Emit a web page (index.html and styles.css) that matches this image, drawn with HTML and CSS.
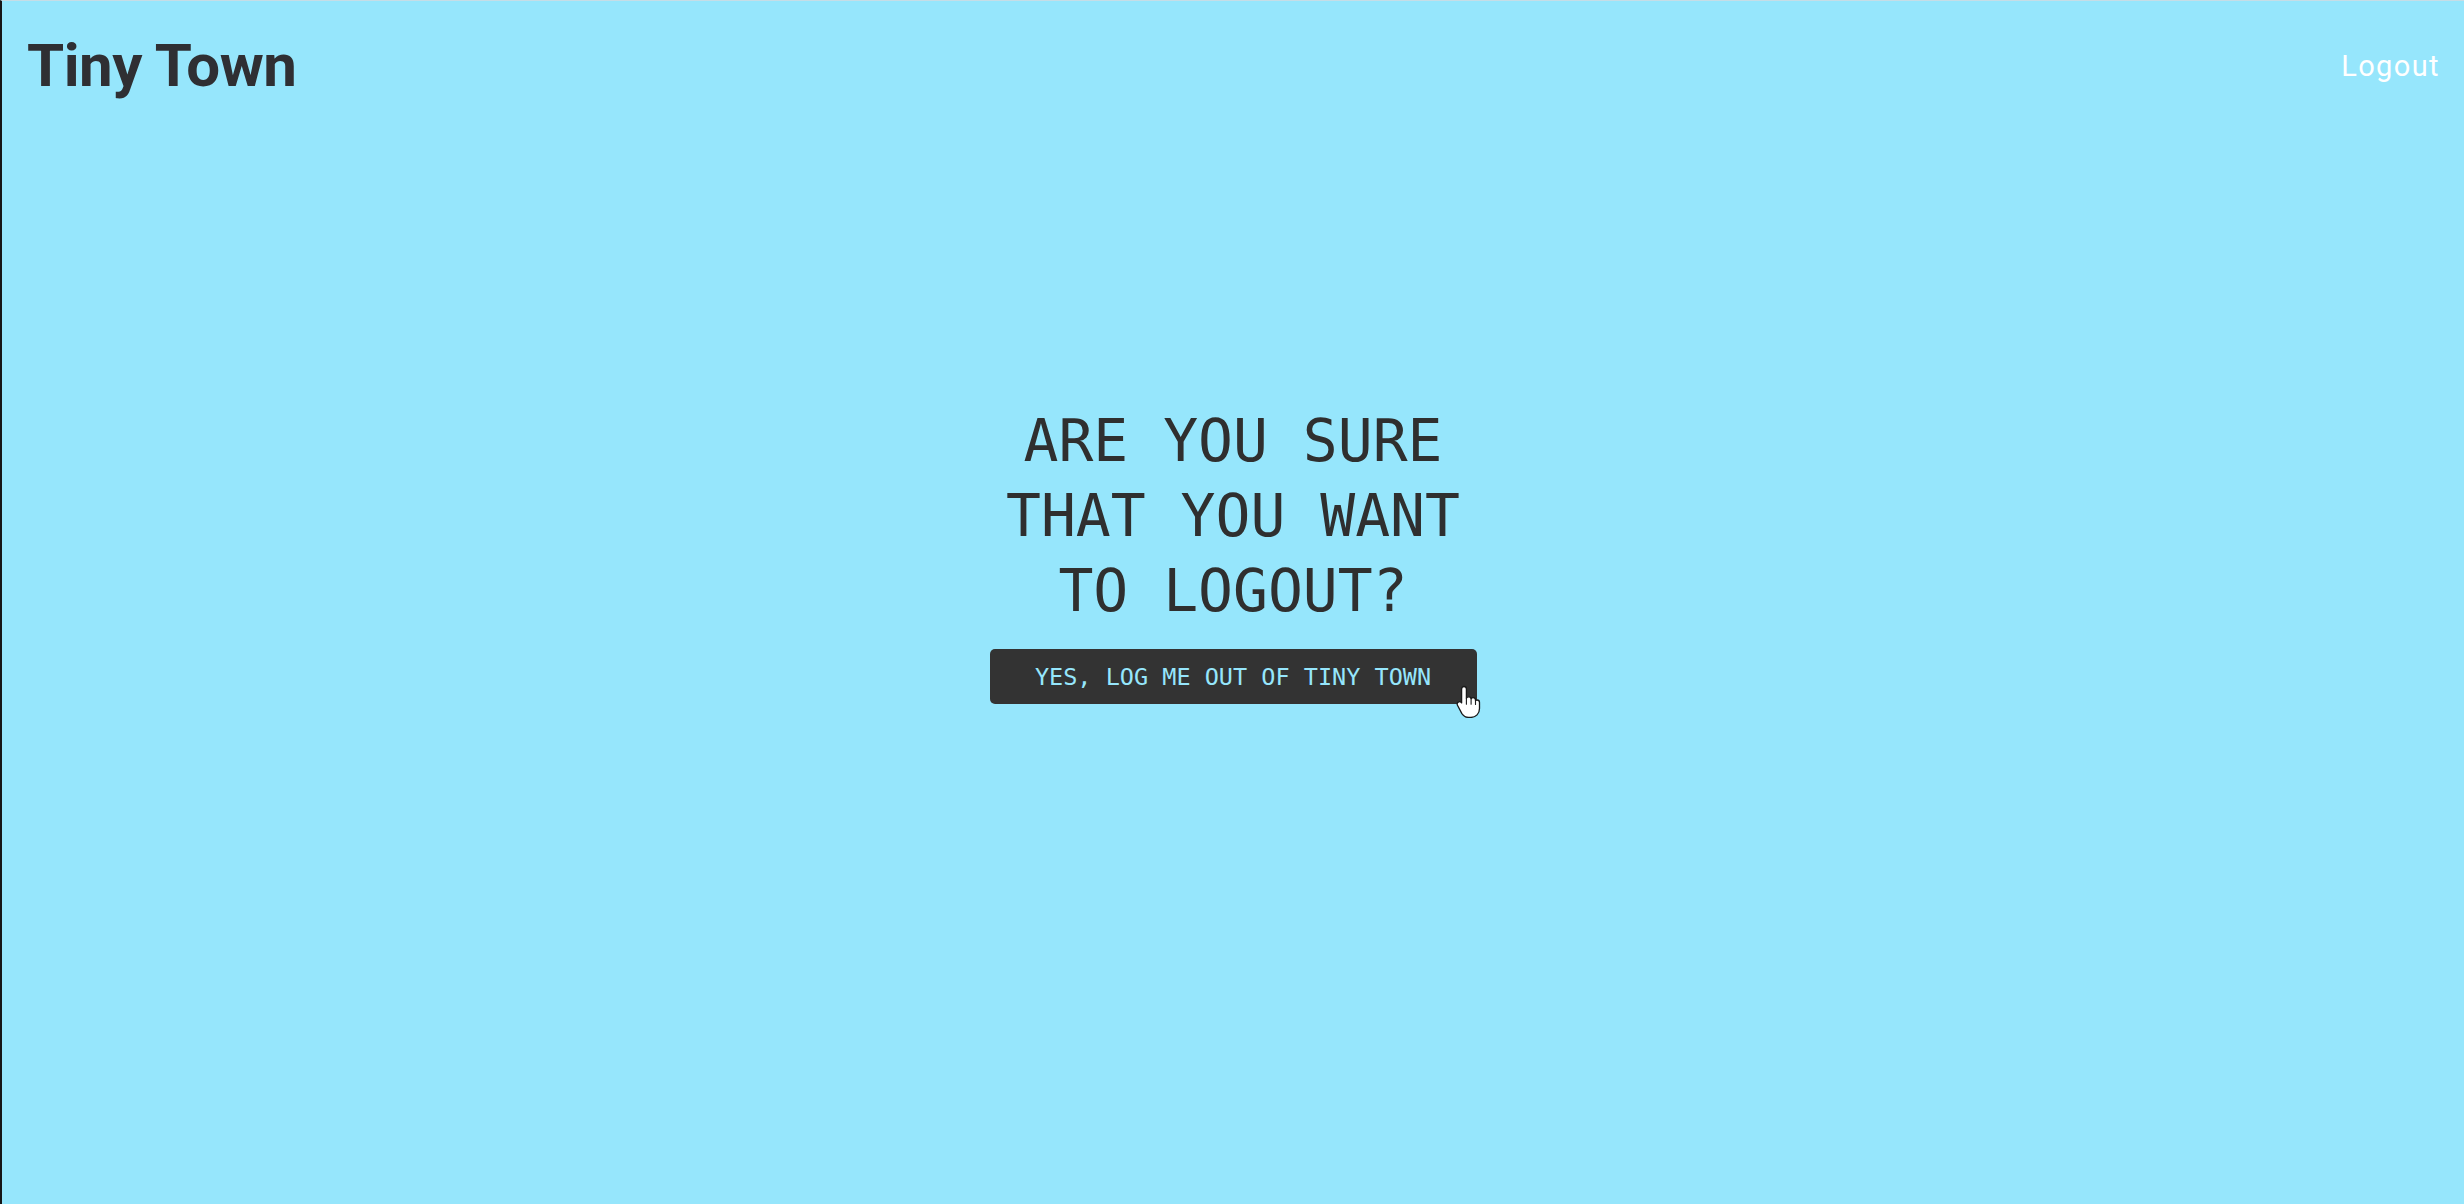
FILE: index.html
```html
<!DOCTYPE html>
<html lang="en">
<head>
<meta charset="utf-8">
<title>Tiny Town - Logout</title>
<link rel="stylesheet" href="styles.css">
</head>
<body>
<div class="page">
  <header class="topbar">
    <a class="brand" href="#">Tiny Town</a>
    <nav class="nav"><a class="nav-link" href="#">Logout</a></nav>
  </header>
  <main class="content">
    <h1 class="question">ARE YOU SURE<br>THAT YOU WANT<br>TO LOGOUT?</h1>
    <div class="action">
      <button class="confirm" type="button">YES, LOG ME OUT OF TINY TOWN</button>
      <svg class="cursor" width="26" height="34" viewBox="0 0 26 34" aria-hidden="true">
        <path d="M8 2.5c1.4 0 2.4 1 2.4 2.4v9.3c.4-.9 1.3-1.4 2.3-1.4 1.2 0 2.1.8 2.4 1.9.4-.6 1.2-1 2-1 1.300 0 2.4 1 2.4 2.4v.4c.4-.3 1-.5 1.6-.5 1.3 0 2.4 1 2.4 2.4v6.2c0 5-3.6 8.8-8.6 8.8h-2.2c-3 0-5.2-1.4-6.8-3.8L1.6 21.5c-.8-1.2-.5-2.700.6-3.4 1-.7 2.4-.5 3.2.5l.2.3V4.9C5.6 3.5 6.6 2.5 8 2.5z" fill="#fff" stroke="#1a1a1a" stroke-width="1.3" stroke-linejoin="round"/>
        <path d="M10.4 14.2v6M15.1 14.6v5.6M19.5 16.4v4" stroke="#1a1a1a" stroke-width="1.1" stroke-linecap="round" fill="none"/>
      </svg>
    </div>
  </main>
</div>
</body>
</html>
```

FILE: styles.css
```css
html, body {
  margin: 0;
  padding: 0;
  height: 100%;
}

body {
  background: #96e6fc;
}

.page {
  box-sizing: border-box;
  min-height: 100vh;
  border-left: 2px solid #161616;
  border-top: 1px solid #c6dde6;
  background: #96e6fc;
  display: flex;
  flex-direction: column;
}

.topbar {
  display: flex;
  align-items: center;
  justify-content: space-between;
  padding: 29px 24px 30px 25px;
}

.brand {
  font-family: Roboto, "Liberation Sans", sans-serif;
  font-weight: 700;
  font-size: 60px;
  color: #2f2f33;
  text-decoration: none;
  letter-spacing: -0.5px;
}

.nav-link {
  font-family: Roboto, "Liberation Sans", sans-serif;
  font-size: 29px;
  letter-spacing: 1.4px;
  color: #ffffff;
  text-decoration: none;
}

.content {
  display: flex;
  flex-direction: column;
  align-items: center;
  padding-top: 273px;
}

.question {
  margin: 0;
  font-family: "DejaVu Sans Mono", "Liberation Mono", monospace;
  font-weight: 400;
  font-size: 58px;
  line-height: 75px;
  color: #2f2f2f;
  text-align: center;
}

.action {
  position: relative;
  margin-top: 20px;
}

.confirm {
  display: block;
  width: 487px;
  height: 55px;
  border: none;
  border-radius: 5px;
  background: #333333;
  color: #96e6fc;
  font-family: "DejaVu Sans Mono", "Liberation Mono", monospace;
  font-size: 23.5px;
  padding: 0;
  cursor: pointer;
}

.cursor {
  position: absolute;
  left: 466px;
  top: 35px;
}
```
